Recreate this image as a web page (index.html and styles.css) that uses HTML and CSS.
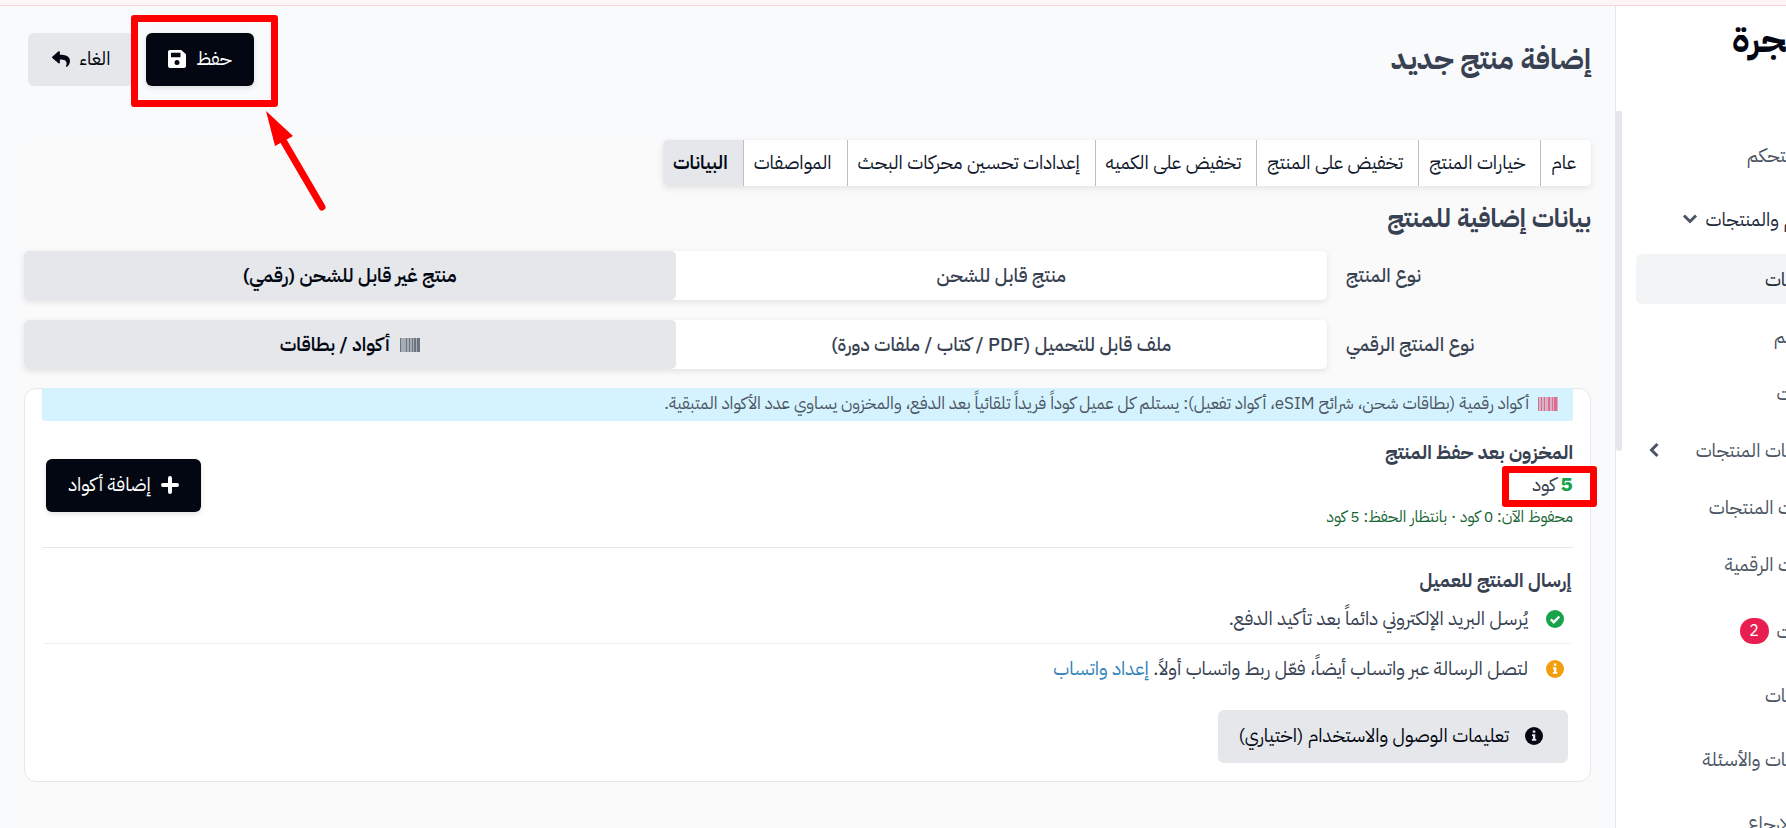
FILE: index.html
```
<!DOCTYPE html>
<html lang="ar" dir="rtl">
  <head>
    <meta charset="UTF-8" />
    <meta name="viewport" content="width=device-width, initial-scale=1.0" />
    <title>إضافة منتج جديد</title>
    <link rel="stylesheet" href="styles.css">
  </head>
  <body>
    <div class="topStrip"></div>
    <div class="layout">
      <aside class="sidebar">
        <div class="logo">&zwj;جرة</div>
        <div class="scrollThumb"></div>
        <nav>
          <a class="navItem" href="#">&zwj;تحكم</a>
          <a class="navItem open tucked" href="#">م والمنتجات
            <svg class="chevron" viewBox="0 0 16 16"><path d="M2 4.500 8 10.500 14 4.500" /></svg>
          </a>
          <div class="subNav">
            <a class="navItem active" href="#">&zwj;ات</a>
            <a class="navItem" href="#">&zwj;م</a>
            <a class="navItem tucked" href="#">&zwj;ت</a>
            <a class="navItem" href="#">&zwj;ات المنتجات
              <svg class="chevron side" viewBox="0 0 16 16"><path d="M11.500 2 5.500 8 11.500 14" /></svg>
            </a>
            <a class="navItem tucked" href="#">ت المنتجات</a>
            <a class="navItem tucked" href="#">ت الرقمية</a>
          </div>
          <a class="navItem tucked" href="#">&zwj;ت <span class="badge">2</span></a>
          <a class="navItem" href="#">&zwj;ات</a>
          <a class="navItem" href="#">&zwj;ات والأسئلة</a>
          <a class="navItem tucked" href="#">الارجاع</a>
        </nav>
      </aside>

      <main>
        <header class="pageHeader">
          <h1>إضافة منتج جديد</h1>
          <div class="actions">
            <div class="saveWrap">
              <button class="btn dark">حفظ
                <svg class="icon" viewBox="0 0 18 18"><path fill="currentColor" fill-rule="evenodd" d="M2 0h11.2L18 4.300V16a2 2 0 0 1-2 2H2a2 2 0 0 1-2-2V2a2 2 0 0 1 2-2zM3 2.800v4.400h9.500V2.800zM9 10a2.500 2.500 0 1 0 0 5 2.500 2.500 0 0 0 0-5z" /></svg>
              </button>
              <span class="markBox"></span>
              <svg class="markArrow" viewBox="0 0 62 102">
                <path d="M56 96 18 31" stroke="#ff0000" stroke-width="7" stroke-linecap="round" />
                <path d="M0 0 27 25 9 35z" fill="#ff0000" />
              </svg>
            </div>
            <button class="btn grey cancel">الغاء
              <svg class="icon" viewBox="0 0 512 512"><path fill="currentColor" d="M8.309 189.836 184.313 37.851C199.719 24.546 224 35.347 224 56.015v80.053c160.629 1.839 288 34.032 288 186.258 0 61.441-39.581 122.309-83.333 154.132-13.653 9.931-33.111-2.533-28.077-18.631 45.344-145.012-21.507-183.510-176.590-185.742V360c0 20.700-24.300 31.453-39.687 18.164l-176.004-152c-11.071-9.562-11.086-26.753 0-36.328z" /></svg>
            </button>
          </div>
        </header>

        <section class="content">
          <div class="tabs">
            <button>عام</button>
            <button>خيارات المنتج</button>
            <button>تخفيض على المنتج</button>
            <button>تخفيض على الكميه</button>
            <button>إعدادات تحسين محركات البحث</button>
            <button>المواصفات</button>
            <button class="selected">البيانات</button>
          </div>

          <h2>بيانات إضافية للمنتج</h2>

          <div class="formRow" role="radiogroup" aria-labelledby="typeLabel">
            <span class="rowLabel" id="typeLabel">نوع المنتج</span>
            <div class="toggle">
              <input type="radio" name="type" id="typeShip">
              <label for="typeShip">منتج قابل للشحن</label>
              <input type="radio" name="type" id="typeDigital" checked>
              <label for="typeDigital">منتج غير قابل للشحن (رقمي)</label>
            </div>
          </div>

          <div class="formRow" role="radiogroup" aria-labelledby="digitalLabel">
            <span class="rowLabel" id="digitalLabel">نوع المنتج الرقمي</span>
            <div class="toggle">
              <input type="radio" name="digital" id="digitalFile">
              <label for="digitalFile">ملف قابل للتحميل (PDF / كتاب / ملفات دورة)</label>
              <input type="radio" name="digital" id="digitalCodes" checked>
              <label for="digitalCodes">
                <svg class="barcode" viewBox="0 0 20 14"><path class="bars" d="M0 0h20v14H0z" /><path d="M0 0h1v14H0zM6 0h1v14H6zM9 0h1v14H9zM12 0h1v14h-1zM14 0h2v14h-2zM17 0h3v14h-3z" /></svg>
                أكواد / بطاقات
              </label>
            </div>
          </div>

          <div class="card">
            <p class="notice">
              <svg class="barcode pink" viewBox="0 0 20 14"><path class="bars" d="M0 0h20v14H0z" /><path d="M0 0h1v14H0zM3 0h1v14H3zM6 0h1v14H6zM10 0h2v14h-2zM14 0h1v14h-1zM16 0h3v14h-3z" /></svg>
              أكواد رقمية (بطاقات شحن، شرائح eSIM، أكواد تفعيل): يستلم كل عميل كوداً فريداً تلقائياً بعد الدفع، والمخزون يساوي عدد الأكواد المتبقية.
            </p>

            <div class="stock">
              <div>
                <h3>المخزون بعد حفظ المنتج</h3>
                <p class="stockCount"><b>5</b> كود<span class="markBox"></span></p>
                <p class="stockNote">محفوظ الآن: 0 كود · بانتظار الحفظ: 5 كود</p>
              </div>
              <button class="btn dark addCodes">
                <svg class="icon" viewBox="0 0 18 18"><path d="M9 2v14M2 9h14" stroke="currentColor" stroke-width="4" stroke-linecap="round" /></svg>
                إضافة أكواد
              </button>
            </div>

            <div class="delivery">
              <h3>إرسال المنتج للعميل</h3>
              <p class="channel">
                <svg class="icon" viewBox="0 0 18 18"><circle cx="9" cy="9" r="9" fill="#16a34a" /><path d="M4.800 9.300 7.800 12.200 13.300 6.500" fill="none" stroke="#fff" stroke-width="2.400" /></svg>
                يُرسل البريد الإلكتروني دائماً بعد تأكيد الدفع.
              </p>
              <p class="channel">
                <svg class="icon" viewBox="0 0 18 18"><circle cx="9" cy="9" r="9" fill="#f59e0b" /><path d="M7.800 3.500h2.500v2.300H7.800zM7 7.200h3.300v4.800h1v1.700H6.900V12h1V8.900H7z" fill="#fff" /></svg>
                <span>لتصل الرسالة عبر واتساب أيضاً، فعّل ربط واتساب أولاً. <a href="#">إعداد واتساب</a></span>
              </p>
              <button class="btn grey guide">
                <svg class="icon" viewBox="0 0 18 18"><circle cx="9" cy="9" r="9" fill="#030712" /><path d="M7.800 3.500h2.500v2.300H7.800zM7 7.200h3.300v4.800h1v1.700H6.900V12h1V8.900H7z" fill="#e5e7eb" /></svg>
                تعليمات الوصول والاستخدام (اختياري)
              </button>
            </div>
          </div>
        </section>
      </main>
    </div>
  </body>
</html>
```
FILE: styles.css
```
* {
  box-sizing: border-box;
}

body {
  margin: 0;
  height: 100vh;
  overflow: hidden;
  display: flex;
  flex-direction: column;
  font-family: "IBM Plex Sans Arabic", "Noto Sans Arabic", "Noto Sans", "DejaVu Sans", sans-serif;
  font-size: 19px;
  color: #374151;
  background-color: #f8fafc;
}

h1,
h2,
h3,
p {
  margin: 0;
}

button {
  font-family: inherit;
  font-size: inherit;
  border: none;
  cursor: pointer;
}

.topStrip {
  height: 6px;
  flex-shrink: 0;
  background-color: #fff5f5;
  border-bottom: 1px solid #fad7d9;
}

.layout {
  display: flex;
  flex: 1;
  min-height: 0;
}

/* sidebar */
.sidebar {
  position: relative;
  width: 171px;
  flex-shrink: 0;
  overflow: hidden;
  background-color: #fff;
  border-left: 1px solid #e5e7eb;
}

.logo {
  height: 117px;
  padding-top: 10px;
  font-size: 36px;
  line-height: 48px;
  font-weight: bold;
  color: #030712;
}

.scrollThumb {
  position: absolute;
  left: 0;
  top: 105px;
  width: 6px;
  height: 340px;
  border-radius: 0 0 3px 3px;
  background-color: #e5e7eb;
}

.navItem {
  display: flex;
  align-items: center;
  gap: 8px;
  height: 64px;
  color: #4b5563;
  text-decoration: none;
  white-space: nowrap;
}

.navItem.open {
  color: #1f2937;
}

/* first letter runs under the window edge */
.navItem.tucked {
  margin-right: -8px;
}

.subNav {
  display: flex;
  flex-direction: column;
  gap: 7px;
  padding: 3px 0 10px;
}

.subNav .navItem {
  height: 50px;
  margin-left: 20px;
}

.navItem.active {
  border-radius: 6px 0 0 6px;
  background-color: #f3f4f6;
  color: #1f2937;
}

.chevron {
  width: 16px;
  height: 16px;
  fill: none;
  stroke: #4b5563;
  stroke-width: 3;
}

.chevron.side {
  margin-right: auto;
  margin-left: 10px;
}

.badge {
  width: 29px;
  line-height: 26px;
  border-radius: 13px;
  text-align: center;
  font-size: 16px;
  color: #fff;
  background-color: #e91e50;
}

/* page */
main {
  flex: 1;
  min-width: 0;
  padding: 0 24px;
  display: flex;
  flex-direction: column;
}

.pageHeader {
  display: flex;
  justify-content: space-between;
  align-items: center;
  padding: 27px 0 54px 4px;
}

h1 {
  font-size: 29px;
  line-height: 40px;
}

.actions {
  display: flex;
  gap: 12px;
}

.saveWrap {
  position: relative;
}

.btn {
  display: flex;
  align-items: center;
  justify-content: center;
  gap: 10px;
  height: 53px;
  padding: 0 6px 2px;
  border-radius: 6px;
}

.btn.dark {
  width: 108px;
  color: #fff;
  background-color: #030712;
  box-shadow: 0 2px 5px rgba(0, 0, 0, 0.12);
}

.btn.grey {
  color: #030712;
  background-color: #e5e7eb;
}

.btn.cancel {
  width: 106px;
}

.icon {
  width: 18px;
  height: 18px;
  flex-shrink: 0;
}

/* red highlights */
.markBox {
  position: absolute;
  z-index: 1;
  top: -18px;
  right: -24px;
  bottom: -21px;
  left: -15px;
  border: 7px solid #ff0000;
  border-radius: 3px;
}

.markArrow {
  position: absolute;
  top: 78px;
  left: 120px;
  width: 62px;
  height: 102px;
  fill: none;
}

.content {
  flex: 1;
  background-color: #fafafa;
}

.tabs {
  display: flex;
  width: fit-content;
  border-radius: 5px;
  overflow: hidden;
  background-color: #fff;
  box-shadow: 0 2px 6px rgba(0, 0, 0, 0.1);
}

.tabs button {
  height: 46px;
  padding: 0 15px 2px 10px;
  white-space: nowrap;
  background-color: #fff;
  color: #0f172a;
  border-left: 1px solid #bfbfbf;
}

.tabs .selected {
  border-left: none;
  font-weight: 600;
  background-color: #e5e7eb;
  color: #030712;
}

h2 {
  padding: 13px 0 12px;
  font-size: 25px;
  line-height: 40px;
}

.formRow {
  display: flex;
  align-items: center;
  margin-bottom: 20px;
}

.rowLabel {
  width: 264px;
  padding-left: 19px;
  text-align: left;
  font-weight: 500;
}

.toggle {
  display: flex;
  flex: 1;
  border-radius: 5px;
  background-color: #fff;
  box-shadow: 0 2px 6px rgba(0, 0, 0, 0.1);
}

.toggle input {
  position: absolute;
  opacity: 0;
}

.toggle label {
  display: flex;
  flex: 1;
  align-items: center;
  justify-content: center;
  gap: 10px;
  height: 49px;
  border-radius: 5px;
  font-weight: 500;
  cursor: pointer;
}

.toggle input:checked + label {
  color: #030712;
  font-weight: 600;
  background-color: #e5e7eb;
}

.barcode {
  width: 20px;
  height: 14px;
  fill: #6b7280;
}

.barcode .bars {
  opacity: 0.5;
}

.barcode.pink {
  fill: #dc6d8f;
}

.card {
  margin-top: -1px;
  padding: 0 17px 18px;
  border: 1px solid #e5e7eb;
  border-radius: 12px;
  background-color: #fff;
}

.notice {
  display: flex;
  align-items: center;
  gap: 9px;
  height: 33px;
  margin-top: -1px;
  padding: 0 15px 2px;
  border-radius: 0 0 3px 3px;
  font-size: 17px;
  color: #4b5563;
  background-color: #d4f3fe;
}

h3 {
  font-size: 19px;
  line-height: 30px;
}

.stock {
  display: flex;
  justify-content: space-between;
  align-items: center;
  padding: 17px 0 14px 4px;
  border-bottom: 1px solid #e5e7eb;
}

.stockCount {
  position: relative;
  line-height: 32px;
}

.stockCount b {
  color: #16a34a;
  font-size: 21px;
}

.stockCount .markBox {
  top: -2px;
  bottom: -6px;
  right: -24px;
  left: auto;
  width: 95px;
}

.stockNote {
  font-size: 16px;
  line-height: 32px;
  color: #166534;
}

.btn.addCodes {
  width: 155px;
}

.delivery {
  padding: 18px 2px 0;
}

.channel {
  display: flex;
  align-items: center;
  gap: 18px;
  height: 47px;
  padding-right: 7px;
  padding-bottom: 2px;
}

.channel + .channel {
  height: 52px;
  border-top: 1px solid #eceef2;
}

.channel a {
  color: #3182b8;
  text-decoration: none;
}

.btn.guide {
  gap: 16px;
  margin: 15px 3px 0 0;
  padding: 0 25px 2px 20px;
}
```
